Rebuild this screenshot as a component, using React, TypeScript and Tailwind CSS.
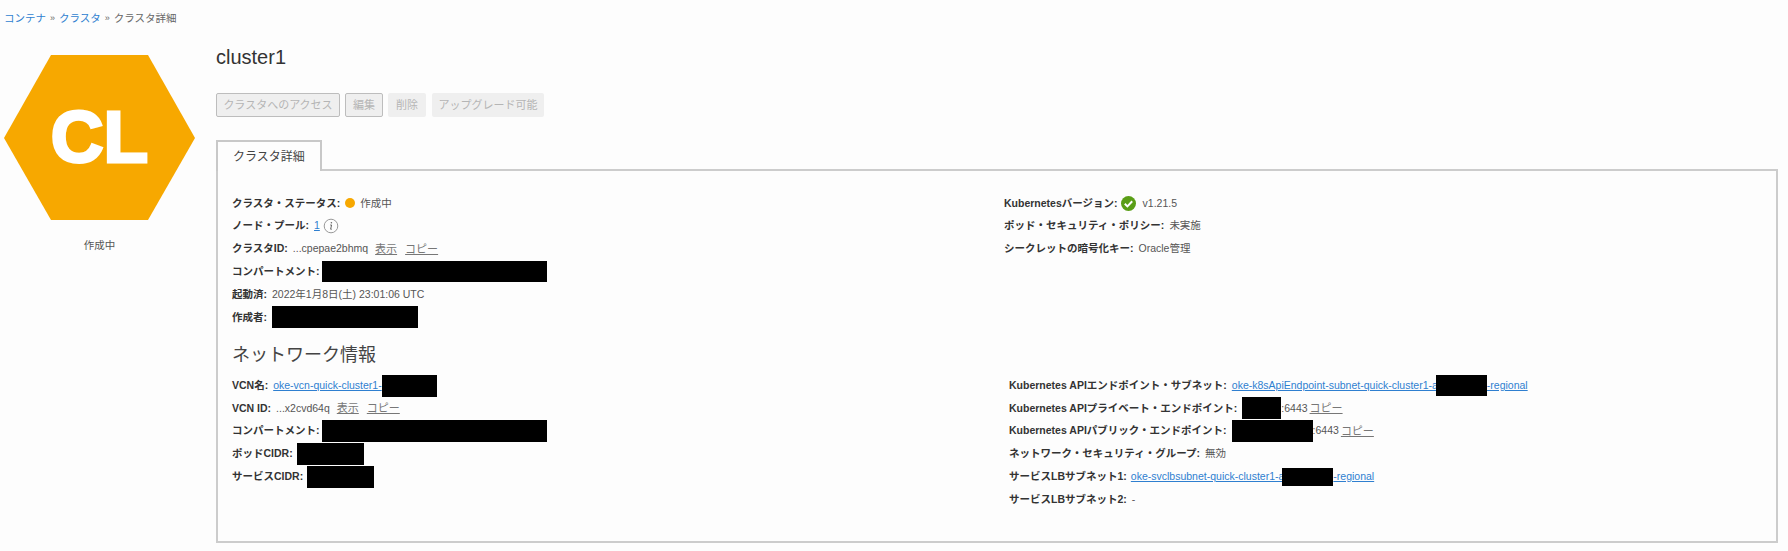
import React from "react";

const Lbl = ({ children }: { children: React.ReactNode }) => (
  <span className="font-bold text-[#333] mr-[5px]">{children}</span>
);
const Lnk = ({ children, cls = "" }: { children: React.ReactNode; cls?: string }) => (
  <a className={`text-[#2f7fd0] underline ${cls}`}>{children}</a>
);
const Act = ({ children, cls = "ml-[7px]" }: { children: React.ReactNode; cls?: string }) => (
  <a className={`text-[#777] underline text-[11px] ${cls}`}>{children}</a>
);
const Box = ({ cls }: { cls: string }) => <span className={`inline-block bg-black shrink-0 relative ${cls}`} />;
const Row = ({ children }: { children: React.ReactNode }) => (
  <div className="flex items-center h-[22.8px] whitespace-nowrap">{children}</div>
);

export default function App() {
  return (
    <div
      className="w-[1788px] h-[551px] overflow-hidden bg-[#fdfdfd] text-[10.5px] text-[#555]"
      style={{ fontFamily: '"Liberation Sans","Noto Sans CJK JP",sans-serif' }}
    >
      <div className="flex items-center h-[37px] pl-[4px] text-[10.5px] text-[#666]">
        <a className="text-[#2f7fd0]">コンテナ</a>
        <span className="mx-[4px] text-[9px]">»</span>
        <a className="text-[#2f7fd0]">クラスタ</a>
        <span className="mx-[4px] text-[9px]">»</span>
        <span>クラスタ詳細</span>
      </div>
      <div className="flex">
        <div className="w-[216px] shrink-0 pt-[18px] pl-[4px]">
          <svg width="192" height="166" viewBox="0 0 192 166" className="block">
            <polygon points="0,83 47,0 144,0 191,83 144,165 47,165" fill="#f7a800" />
            <text x="95.5" y="107" textAnchor="middle" fontSize="73" fontWeight="700" fill="#fff" stroke="#fff" strokeWidth="3" fontFamily="Liberation Sans, sans-serif">CL</text>
          </svg>
          <div className="w-[191px] text-center mt-[17px] text-[#555]">作成中</div>
        </div>
        <div className="flex-1 pr-[10px]">
          <h1 className="text-[20px] leading-[24px] text-[#333] pt-[8px]">cluster1</h1>
          <div className="flex gap-[5px] mt-[24px] text-[#b5b5b5] text-[11px]">
            <span className="flex items-center justify-center w-[124px] h-[24px] bg-[#efefef] border border-[#bdbdbd] rounded-[2px]">クラスタへのアクセス</span>
            <span className="flex items-center justify-center w-[38px] h-[24px] bg-[#efefef] border border-[#bdbdbd] rounded-[2px]">編集</span>
            <span className="flex items-center justify-center w-[38px] h-[24px] bg-[#efefef] rounded-[2px]">削除</span>
            <span className="flex items-center justify-center w-[112px] h-[24px] bg-[#efefef] rounded-[2px] ml-[1px]">アップグレード可能</span>
          </div>
          <div className="flex mt-[23px]">
            <div className="flex items-center justify-center w-[106px] h-[31px] border-2 border-b-0 border-[#c8c8c8] bg-[#fdfdfd] text-[12px] text-[#444] -mb-[2px] relative z-10 leading-none">
              クラスタ詳細
            </div>
          </div>
          <div className="border-2 border-[#cccccc] h-[374px] pl-[14px] pt-[21px]">
            <div className="grid grid-cols-[772px_1fr]">
              <div>
                <Row>
                  <Lbl>クラスタ・ステータス:</Lbl>
                  <span className="w-[10px] h-[10px] rounded-full bg-[#f7a800] mr-[5px]" />
                  <span>作成中</span>
                </Row>
                <Row>
                  <Lbl>ノード・プール:</Lbl>
                  <Lnk>1</Lnk>
                  <svg width="16" height="16" viewBox="0 0 16 16" className="ml-[3px]">
                    <circle cx="8" cy="8" r="6.8" fill="none" stroke="#999" strokeWidth="1" />
                    <circle cx="8.4" cy="4.8" r="0.8" fill="#666" />
                    <path d="M7.2 7h1.4l-1 4.2h1.2" fill="none" stroke="#666" strokeWidth="1" />
                  </svg>
                </Row>
                <Row>
                  <Lbl>クラスタID:</Lbl>
                  <span>...cpepae2bhmq</span>
                  <Act>表示</Act>
                  <Act cls="ml-[8px]">コピー</Act>
                </Row>
                <Row>
                  <Lbl>コンパートメント:</Lbl>
                  <Box cls="w-[225px] h-[21px] -ml-[3px]" />
                </Row>
                <Row>
                  <Lbl>起動済:</Lbl>
                  <span>2022年1月8日(土) 23:01:06 UTC</span>
                </Row>
                <Row>
                  <Lbl>作成者:</Lbl>
                  <Box cls="w-[146px] h-[22px]" />
                </Row>
              </div>
              <div>
                <Row>
                  <Lbl>Kubernetesバージョン:</Lbl>
                  <svg width="15" height="15" viewBox="0 0 15 15" className="mr-[7px] -ml-[2px]">
                    <circle cx="7.5" cy="7.5" r="7.5" fill="#5a9e16" />
                    <path d="M3.8 7.8l2.6 2.6 4.8-5.2" fill="none" stroke="#fff" strokeWidth="2" />
                  </svg>
                  <span>v1.21.5</span>
                </Row>
                <Row>
                  <Lbl>ポッド・セキュリティ・ポリシー:</Lbl>
                  <span>未実施</span>
                </Row>
                <Row>
                  <Lbl>シークレットの暗号化キー:</Lbl>
                  <span>Oracle管理</span>
                </Row>
              </div>
            </div>
            <h2 className="text-[18px] leading-[24px] text-[#444] mt-[14px] mb-[7.5px]">ネットワーク情報</h2>
            <div className="grid grid-cols-[772px_1fr]">
              <div>
                <Row>
                  <Lbl>VCN名:</Lbl>
                  <Lnk>oke-vcn-quick-cluster1-</Lnk>
                  <Box cls="w-[55px] h-[22px]" />
                </Row>
                <Row>
                  <Lbl>VCN ID:</Lbl>
                  <span>...x2cvd64q</span>
                  <Act>表示</Act>
                  <Act cls="ml-[8px]">コピー</Act>
                </Row>
                <Row>
                  <Lbl>コンパートメント:</Lbl>
                  <Box cls="w-[225px] h-[22px] -ml-[3px]" />
                </Row>
                <Row>
                  <Lbl>ポッドCIDR:</Lbl>
                  <Box cls="w-[67px] h-[22px] -ml-[1px]" />
                </Row>
                <Row>
                  <Lbl>サービスCIDR:</Lbl>
                  <Box cls="w-[67px] h-[22px] -ml-[1px]" />
                </Row>
              </div>
              <div className="pl-[5px]">
                <Row>
                  <Lbl>Kubernetes APIエンドポイント・サブネット:</Lbl>
                  <Lnk>oke-k8sApiEndpoint-subnet-quick-cluster1-a</Lnk>
                  <Box cls="w-[51px] h-[21px] -ml-[2px]" />
                  <Lnk>-regional</Lnk>
                </Row>
                <Row>
                  <Lbl>Kubernetes APIプライベート・エンドポイント:</Lbl>
                  <Box cls="w-[39px] h-[22px]" />
                  <span>:6443</span>
                  <Act cls="ml-[2px]">コピー</Act>
                </Row>
                <Row>
                  <Lbl>Kubernetes APIパブリック・エンドポイント:</Lbl>
                  <Box cls="w-[81px] h-[22px]" />
                  <span>:6443</span>
                  <Act cls="ml-[2px]">コピー</Act>
                </Row>
                <Row>
                  <Lbl>ネットワーク・セキュリティ・グループ:</Lbl>
                  <span>無効</span>
                </Row>
                <Row>
                  <Lbl>サービスLBサブネット1:</Lbl>
                  <Lnk cls="-ml-[1px]">oke-svclbsubnet-quick-cluster1-a</Lnk>
                  <Box cls="w-[51px] h-[18px] -ml-[2px]" />
                  <Lnk>-regional</Lnk>
                </Row>
                <Row>
                  <Lbl>サービスLBサブネット2:</Lbl>
                  <span>-</span>
                </Row>
              </div>
            </div>
          </div>
        </div>
      </div>
    </div>
  );
}
